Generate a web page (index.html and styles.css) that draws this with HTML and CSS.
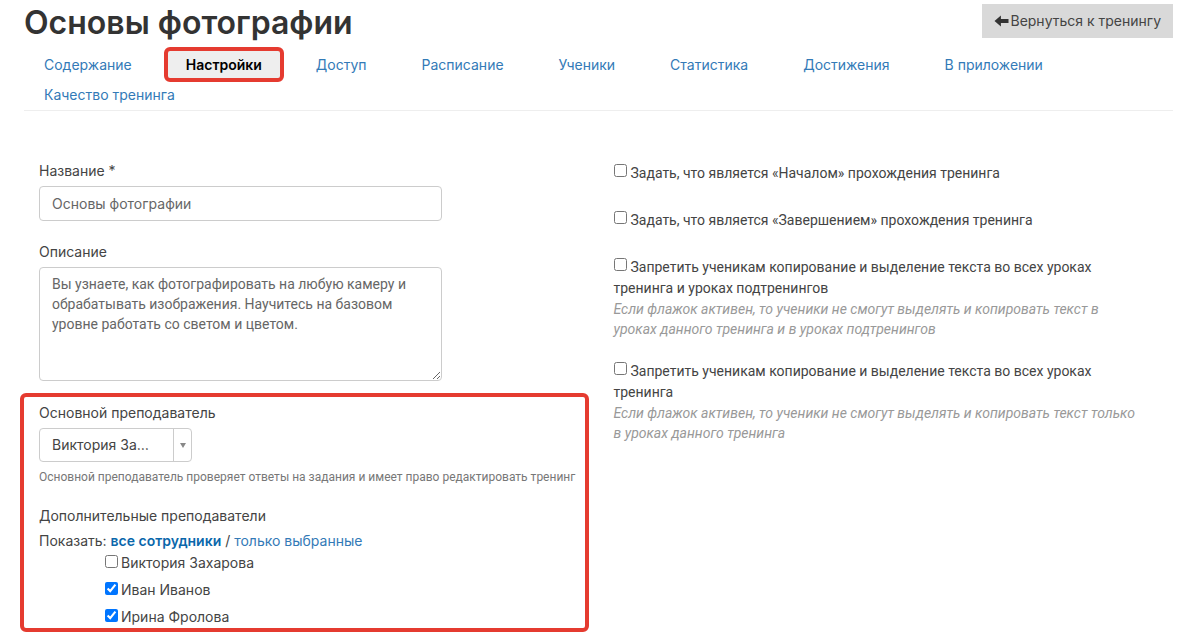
FILE: index.html
```
<!DOCTYPE html>
<html lang="ru">
<head>
<meta charset="utf-8">
<title>Основы фотографии</title>
<link rel="stylesheet" href="styles.css">
</head>
<body>
<div class="page">
  <header class="header">
    <h1 class="title">Основы фотографии</h1>
    <a class="back" href="#"><svg class="back-icon" viewBox="0 0 14 12" aria-hidden="true"><path d="M0 6 6.4 .4V4H14V8H6.4V11.6Z"/></svg>Вернуться к тренингу</a>
  </header>
  <nav class="tabs">
    <a class="tab" href="#">Содержание</a>
    <a class="tab tab-active" href="#" aria-current="page">Настройки</a>
    <a class="tab" href="#">Доступ</a>
    <a class="tab" href="#">Расписание</a>
    <a class="tab" href="#">Ученики</a>
    <a class="tab" href="#">Статистика</a>
    <a class="tab" href="#">Достижения</a>
    <a class="tab" href="#">В приложении</a>
    <a class="tab" href="#">Качество тренинга</a>
  </nav>
  <form class="columns">
    <div class="column">
      <div class="field">
        <label class="label" for="name">Название *</label>
        <input class="control" id="name" type="text" value="Основы фотографии">
      </div>
      <div class="field">
        <label class="label" for="about">Описание</label>
        <textarea class="control about" id="about">Вы узнаете, как фотографировать на любую камеру и обрабатывать изображения. Научитесь на базовом уровне работать со светом и цветом.</textarea>
      </div>
      <section class="teachers">
        <label class="label" for="teacher">Основной преподаватель</label>
        <div class="picker">
          <select class="picker-select" id="teacher"><option>Виктория За…</option></select>
          <span class="picker-arrow" aria-hidden="true"></span>
        </div>
        <p class="help">Основной преподаватель проверяет ответы на задания и имеет право редактировать тренинг</p>
        <p class="subtitle">Дополнительные преподаватели</p>
        <p class="filter">Показать: <a class="link link-current" href="#">все сотрудники</a> / <a class="link" href="#">только выбранные</a></p>
        <div class="people">
          <label class="person"><input class="check" type="checkbox">Виктория Захарова</label>
          <label class="person"><input class="check" type="checkbox" checked>Иван Иванов</label>
          <label class="person"><input class="check" type="checkbox" checked>Ирина Фролова</label>
        </div>
      </section>
    </div>
    <div class="column options">
      <label class="option"><input class="check" type="checkbox">Задать, что является «Началом» прохождения тренинга</label>
      <label class="option"><input class="check" type="checkbox">Задать, что является «Завершением» прохождения тренинга</label>
      <div class="option-group">
        <div>
          <label class="option"><input class="check" type="checkbox">Запретить ученикам копирование и выделение текста во всех уроках<br>тренинга и уроках подтренингов</label>
          <p class="note">Если флажок активен, то ученики не смогут выделять и копировать текст в<br>уроках данного тренинга и в уроках подтренингов</p>
        </div>
        <div>
          <label class="option"><input class="check" type="checkbox">Запретить ученикам копирование и выделение текста во всех уроках<br>тренинга</label>
          <p class="note">Если флажок активен, то ученики не смогут выделять и копировать текст только<br>в уроках данного тренинга</p>
        </div>
      </div>
    </div>
  </form>
</div>
</body>
</html>
```
FILE: styles.css
```
* { box-sizing: border-box; }
body { margin: 0; background: #fff; color: #444; font: 14px/20px Inter, "Liberation Sans", sans-serif; }
p { margin: 0; }
.page { padding: 4px 27px 0 24px; }
.header { display: flex; justify-content: space-between; align-items: flex-start; }
.title { margin: 0; font-size: 32px; line-height: 38px; font-weight: 600; color: #333; }
.back { display: flex; align-items: center; gap: 1px; height: 34px; padding: 0 12px; background: #d9d9d9; color: #444; text-decoration: none; }
.back-icon { width: 15px; height: 12px; fill: #333; }
.tabs { display: flex; flex-wrap: wrap; column-gap: 15px; padding: 8px 0 0; border-bottom: 1px solid #eee; }
.tab { height: 30px; padding: 0 20px; line-height: 30px; color: #337ab7; text-decoration: none; }
.tab-active { height: 35px; margin: -3px -3px -2px; padding: 0 18px; border: 4px solid #e53b30; border-radius: 6px; background: #eee; color: #000; font-weight: 600; line-height: 28px; }
.columns { display: grid; grid-template-columns: minmax(0, 1fr) minmax(0, 1fr); padding-top: 50px; }
.column { padding: 0 15px; }
.field { width: 403px; max-width: 100%; margin-bottom: 21px; }
.label { display: block; margin-bottom: 5px; }
.control { display: block; width: 100%; height: 35px; padding: 6px 12px; border: 1px solid #ccc; border-radius: 4px; background: #fff; color: #666; font: inherit; }
.about { height: 114px; font-family: Roboto, sans-serif; resize: vertical; }
.teachers { margin: -9px -5px 0 -19px; padding: 6px 5px 0 15px; border: 4px solid #e53b30; border-radius: 6px; }
.picker { position: relative; width: 153px; height: 34px; }
.picker-select { appearance: none; width: 100%; height: 100%; padding: 0 30px 0 12px; border: 1px solid #ccc; border-radius: 4px; background: #fff; color: #444; font: inherit; }
.picker-arrow { position: absolute; top: 1px; right: 1px; bottom: 1px; width: 18px; display: grid; place-items: center; border-left: 1px solid #ccc; pointer-events: none; }
.picker-arrow::before { content: ""; border: 3px solid transparent; border-top: 5px solid #888; border-bottom: 0; }
.help { margin-top: 6px; font-family: Roboto, sans-serif; font-size: 12px; line-height: 18px; color: #777; white-space: nowrap; }
.subtitle { margin-top: 20px; }
.filter { margin-top: 5px; }
.link { color: #337ab7; text-decoration: none; }
.link-current { color: #0a67ab; font-weight: 600; }
.people { display: grid; row-gap: 5px; padding: 1px 0 0 66px; }
.person { line-height: 22px; }
.check { width: 13px; height: 13px; margin: 0 3px 0 0; vertical-align: 0; }
.options { display: flex; flex-direction: column; gap: 26px; padding-top: 2px; font-family: Roboto, sans-serif; }
.options .check { margin-right: 4px; vertical-align: 1px; }
.option-group { display: grid; row-gap: 22px; }
.option { display: block; line-height: 21px; }
.note { font-style: italic; color: #999; }
```
